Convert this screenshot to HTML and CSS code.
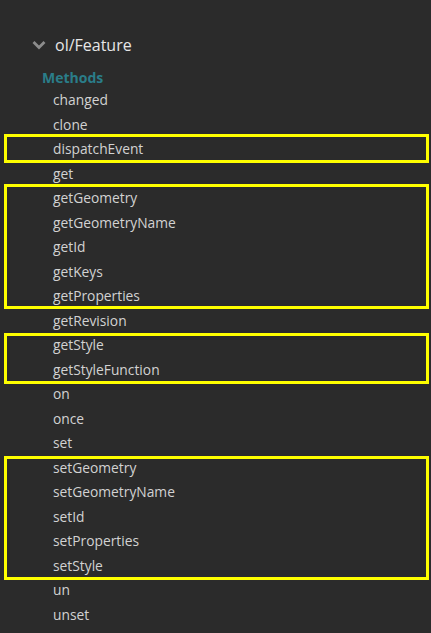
FILE: index.html
```html
<!DOCTYPE html>
<html>
<head>
<meta charset="utf-8">
<link rel="stylesheet" href="styles.css">
</head>
<body>
<div class="tree">
  <div class="node-header">
    <svg class="chevron" width="14" height="10" viewBox="0 0 14 10"><path d="M1.5 2 L7 7.5 L12.5 2" fill="none" stroke="#8c8c8c" stroke-width="2.8"/></svg>
    <span class="node-title">ol/Feature</span>
  </div>
  <div class="section-title">Methods</div>
  <ul class="methods">
    <li>changed</li>
    <li>clone</li>
    <li class="hl hl-first">dispatchEvent</li>
    <li>get</li>
  </ul>
  <ul class="methods hl">
    <li>getGeometry</li>
    <li>getGeometryName</li>
    <li>getId</li>
    <li>getKeys</li>
    <li>getProperties</li>
  </ul>
  <ul class="methods">
    <li>getRevision</li>
  </ul>
  <ul class="methods hl hl-low">
    <li>getStyle</li>
    <li>getStyleFunction</li>
  </ul>
  <ul class="methods">
    <li>on</li>
    <li>once</li>
    <li>set</li>
  </ul>
  <ul class="methods hl hl-low">
    <li>setGeometry</li>
    <li>setGeometryName</li>
    <li>setId</li>
    <li>setProperties</li>
    <li>setStyle</li>
  </ul>
  <ul class="methods">
    <li>un</li>
    <li>unset</li>
  </ul>
</div>
</body>
</html>
```
FILE: styles.css
```css
html, body {
  margin: 0;
  padding: 0;
  background: #2b2b2b;
}
body {
  font-family: "Open Sans", "Liberation Sans", sans-serif;
  color: #d2d2d2;
}
.tree {
  padding-top: 33px;
}
.node-header {
  display: flex;
  align-items: center;
  height: 24px;
  padding-left: 32px;
  gap: 9px;
}
.chevron {
  display: block;
  flex: none;
}
.node-title {
  font-size: 16px;
  color: #e6e6e6;
}
.section-title {
  margin-top: 11px;
  padding-left: 42px;
  height: 20px;
  line-height: 20px;
  font-size: 14px;
  font-weight: 700;
  color: #2a7d89;
}
.methods {
  list-style: none;
  margin: 0;
  padding: 0;
}
.methods li {
  padding-left: 53px;
  height: 24.5px;
  line-height: 24.5px;
  font-size: 13.8px;
}
.hl {
  position: relative;
}
.hl::after {
  content: "";
  position: absolute;
  left: 4px;
  right: 2px;
  top: -2px;
  bottom: 0;
  border: 3px solid #ffff00;
  pointer-events: none;
}
.hl-first::after {
  top: -3px;
  bottom: -1px;
}
.hl-low::after {
  top: 0;
  bottom: -2px;
}
```
